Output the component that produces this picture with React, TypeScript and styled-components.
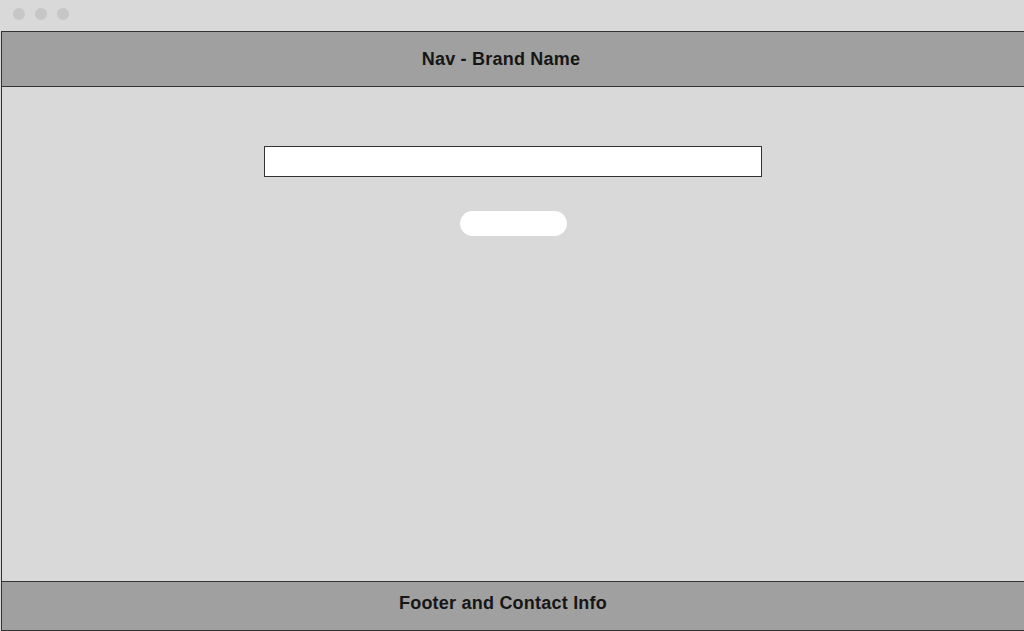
import React from "react";
import styled, { createGlobalStyle } from "styled-components";

const GlobalStyle = createGlobalStyle`
  html, body {
    margin: 0;
    padding: 0;
    background: #d9d9d9;
    overflow: hidden;
  }
  * { box-sizing: border-box; }
`;

const Window = styled.div`
  width: 1024px;
  height: 631px;
  display: flex;
  flex-direction: column;
  background: #d9d9d9;
  font-family: "Liberation Sans", Arial, sans-serif;
`;

const TitleBar = styled.div`
  height: 31px;
  display: flex;
  align-items: flex-start;
  gap: 10px;
  padding: 8px 0 0 13px;
`;

const Dot = styled.span`
  width: 12px;
  height: 12px;
  border-radius: 50%;
  background: #c6c6c6;
`;

const Frame = styled.div`
  flex: 1;
  margin-left: 1px;
  border-left: 1px solid #333;
  display: flex;
  flex-direction: column;
`;

const Bar = styled.div<{ $h: number; $shift: number; $lift: number }>`
  height: ${(p) => p.$h}px;
  background: #a0a0a0;
  border-top: 1px solid #333;
  border-bottom: 1px solid #333;
  display: flex;
  align-items: center;
  justify-content: center;
  padding-right: ${(p) => p.$shift}px;
  padding-bottom: ${(p) => p.$lift}px;
  font-size: 18px;
  font-weight: 700;
  letter-spacing: 0.22px;
  color: #161616;
`;

const Main = styled.main`
  flex: 1;
  display: flex;
  flex-direction: column;
  align-items: center;
  padding-top: 59px;
  gap: 34px;
`;

const Field = styled.input`
  width: 498px;
  height: 31px;
  border: 1px solid #333;
  background: #fff;
  outline: none;
  padding: 0 6px;
`;

const Pill = styled.button`
  width: 107px;
  height: 25px;
  border: none;
  border-radius: 13px;
  background: #fff;
  margin-left: 1px;
`;

export default function App() {
  return (
    <>
      <GlobalStyle />
      <Window>
        <TitleBar>
          <Dot />
          <Dot />
          <Dot />
        </TitleBar>
        <Frame>
          <Bar $h={56} $shift={24} $lift={0}>Nav - Brand Name</Bar>
          <Main>
            <Field type="text" />
            <Pill type="button" />
          </Main>
          <Bar $h={50} $shift={20} $lift={5}>Footer and Contact Info</Bar>
        </Frame>
      </Window>
    </>
  );
}
